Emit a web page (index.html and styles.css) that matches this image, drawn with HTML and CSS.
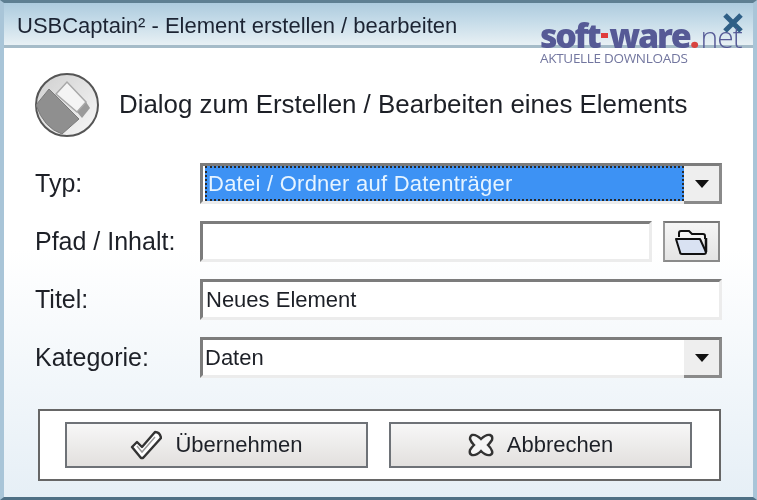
FILE: index.html
```html
<!DOCTYPE html>
<html lang="de">
<head>
<meta charset="utf-8">
<title>USBCaptain²</title>
<link rel="stylesheet" href="styles.css">
</head>
<body>
<div class="window">
  <div class="titlebar"><span class="title">USBCaptain² - Element erstellen / bearbeiten</span></div>
  <div class="content">
    <div class="head">
      <svg class="head-icon" width="66" height="66" viewBox="0 0 66 66">
        <defs>
          <linearGradient id="disc" x1="0" y1="0" x2="1" y2="1"><stop offset="0" stop-color="#cfcfcf"/><stop offset="1" stop-color="#f8f8f8"/></linearGradient>
        </defs>
        <circle cx="33" cy="33" r="31" fill="url(#disc)" stroke="#555" stroke-width="2"/>
        <path d="M43 40 L52 30 L56 36 L48 46 Z" fill="#9a9a9a"/>
        <path d="M22 22 L33 10 L52 30 L43 40 Z" fill="#f4f4f4" stroke="#a8a8a8" stroke-width="1.5"/>
        <path d="M2 33 L15 17 L45 47 L28 62 Q10 56 2 33 Z" fill="#8f8f8f" stroke="#7a7a7a" stroke-width="1"/>
      </svg>
      <span class="head-text">Dialog zum Erstellen / Bearbeiten eines Elements</span>
    </div>
    <div class="form">
      <div class="row">
        <label class="label">Typ:</label>
        <div class="field combo">
          <div class="combo-value selected"><span>Datei / Ordner auf Datenträger</span></div>
          <div class="arrow"><i></i></div>
        </div>
      </div>
      <div class="row">
        <label class="label">Pfad / Inhalt:</label>
        <div class="field path"></div>
        <div class="browse">
          <svg width="36" height="30" viewBox="0 0 36 30">
            <path d="M5 10 V6 Q5 4 7 4 H15 L18 7 H29 Q31 7 31 9 V12" fill="#f4f4f4" stroke="#111" stroke-width="2"/>
            <path d="M2 12 H26 L32 25 Q32 27 30 27 H8 Q6 27 6 25 Z" fill="#d9e2f2" stroke="#111" stroke-width="2" stroke-linejoin="round"/>
            <path d="M32 11 V25" stroke="#111" stroke-width="2.5" fill="none"/>
          </svg>
        </div>
      </div>
      <div class="row">
        <label class="label">Titel:</label>
        <div class="field">Neues Element</div>
      </div>
      <div class="row">
        <label class="label">Kategorie:</label>
        <div class="field combo">
          <div class="combo-value">Daten</div>
          <div class="arrow"><i></i></div>
        </div>
      </div>
    </div>
    <div class="footer">
      <div class="btn">
        <svg width="32" height="30" viewBox="0 0 32 30">
          <path d="M2 17 L7 12 L12 17 L25 2 Q30 2 31 8 L13 28 H11 Z" fill="#fff" stroke="#333" stroke-width="2.4" stroke-linejoin="round"/>
          <path d="M7 16 L12 22 L25 7" fill="none" stroke="#999" stroke-width="1.5"/>
        </svg>
        <span>Übernehmen</span>
      </div>
      <div class="btn">
        <svg width="26" height="24" viewBox="0 0 26 24">
          <path d="M4 2 Q8 1 13 6 Q18 1 22 2 Q25 3 24 7 Q22 10 20 12 Q23 15 24 18 Q25 21 22 22 Q18 23 13 18 Q8 23 4 22 Q1 21 2 17 Q4 14 6 12 Q3 9 2 6 Q2 3 4 2 Z" fill="#f6f6f6" stroke="#333" stroke-width="2.4"/>
        </svg>
        <span>Abbrechen</span>
      </div>
    </div>
  </div>
  <svg class="close" width="20" height="20" viewBox="0 0 20 20"><path d="M2 2 L18 18 M18 2 L2 18" stroke="#2f5f86" stroke-width="5"/></svg>
  <div class="watermark">
    <div class="wm-logo"><b class="wm-soft">soft</b><i class="wm-dash"></i><b class="wm-ware">ware</b><em>.</em><span>net</span></div>
    <div class="wm-sub">AKTUELLE DOWNLOADS</div>
  </div>
</div>
</body>
</html>
```

FILE: styles.css
```css
* { box-sizing: border-box; }
html, body { margin: 0; padding: 0; }
body { width: 757px; height: 500px; overflow: hidden; background: #fff; font-family: "Liberation Sans", Arial, sans-serif; }
.window {
  position: relative;
  width: 757px;
  height: 500px;
  display: flex;
  flex-direction: column;
  border-style: solid;
  border-color: #5e7f92 #a9c5d8 #4f7085 #a9c5d8;
  border-width: 3px 4px 3px 4px;
  color: #1d2027;
  filter: blur(0.45px);
}
.titlebar {
  height: 45px;
  flex: none;
  display: flex;
  align-items: center;
  padding: 4px 0 0 13px;
  background: linear-gradient(#adcbde 0, #c9deea 50%, #e8f0f4 100%);
  border-bottom: 3px solid #a5bbc8;
}
.title { font-size: 22px; color: #1c2433; white-space: nowrap; }
.content {
  flex: 1;
  display: flex;
  flex-direction: column;
  background: linear-gradient(#fff 0, #fff 45%, #e6eff6 100%);
}
.head { height: 115px; flex: none; display: flex; align-items: center; padding: 0 0 2px 30px; gap: 19px; }
.head-text { font-size: 25.9px; white-space: nowrap; }
.form { display: flex; flex-direction: column; gap: 17px; padding-left: 31px; padding-right: 31px; }
.row { display: flex; align-items: center; height: 41px; }
.label { width: 165px; flex: none; font-size: 25px; white-space: nowrap; }
.field {
  flex: 1;
  height: 41px;
  display: flex;
  align-items: center;
  padding-left: 3px;
  background: #fff;
  font-size: 22px;
  border: 3px solid #ececec;
  border-top-color: #7c7c7c;
  border-left-color: #7c7c7c;
}
.combo { padding: 0; }
.combo-value { flex: 1; height: 100%; display: flex; align-items: center; padding-left: 2px; }
.selected { padding-left: 2px; }
.selected span {
  display: flex;
  align-items: center;
  width: 100%;
  height: 100%;
  background: #3d92f4;
  color: #e6f4ff;
  border: 2px dotted #2a2a2a;
  padding-left: 1px;
  letter-spacing: 0.25px;
}
.arrow {
  width: 38px;
  height: 41px;
  margin: -3px -3px -3px 0;
  flex: none;
  display: flex;
  align-items: center;
  justify-content: center;
  background: #eeeeee;
  border-top: 3px solid #7c7c7c;
  border-right: 3px solid #8a8a8a;
  border-bottom: 3px solid #8a8a8a;
}
.arrow i { width: 0; height: 0; border: 7px solid transparent; border-top: 8px solid #111; border-bottom: 0; }
.path { flex: none; width: 452px; }
.browse {
  width: 57px;
  height: 41px;
  margin-left: 11px;
  flex: none;
  display: flex;
  align-items: center;
  justify-content: center;
  background: linear-gradient(#f6f6f6, #e4e4e4);
  border: 2px solid #777;
  border-color: #777 #8a8a8a #8a8a8a #999;
}
.footer {
  align-self: flex-start;
  width: 683px;
  height: 72px;
  margin: 31px 0 0 34px;
  padding: 0 0 0 25px;
  display: flex;
  align-items: center;
  gap: 21px;
  background: #fff;
  border: 2px solid #666;
}
.btn {
  width: 303px;
  height: 46px;
  display: flex;
  align-items: center;
  justify-content: center;
  gap: 13px;
  font-size: 22px;
  background: linear-gradient(#f7f7f7, #e2e0de);
  border: 2px solid #6e7277;
}
.close { position: absolute; top: 10px; right: 10px; }
.watermark { position: absolute; top: 17px; left: 536px; color: #565a96; }
.wm-logo { display: flex; align-items: baseline; height: 30px; font-family: "Open Sans", sans-serif; font-size: 34px; line-height: 30px; }
.wm-logo b { font-weight: 800; color: #565a96; }
.wm-logo .wm-soft { letter-spacing: -2.4px; }
.wm-logo .wm-ware { letter-spacing: -2.2px; }
.wm-dash { display: inline-block; width: 7px; height: 5px; margin: 0 1px 0 2px; background: #e03c3c; align-self: center; }
.wm-logo em { font-style: normal; font-weight: 800; color: #d8433f; }
.wm-logo span { font-size: 30px; font-weight: 300; color: #565a96; letter-spacing: -1px; margin-left: 1px; }
.wm-sub { font-family: "Open Sans", sans-serif; font-size: 13.5px; line-height: 14px; letter-spacing: -0.3px; color: #72769f; margin-top: 1px; white-space: nowrap; }
```
